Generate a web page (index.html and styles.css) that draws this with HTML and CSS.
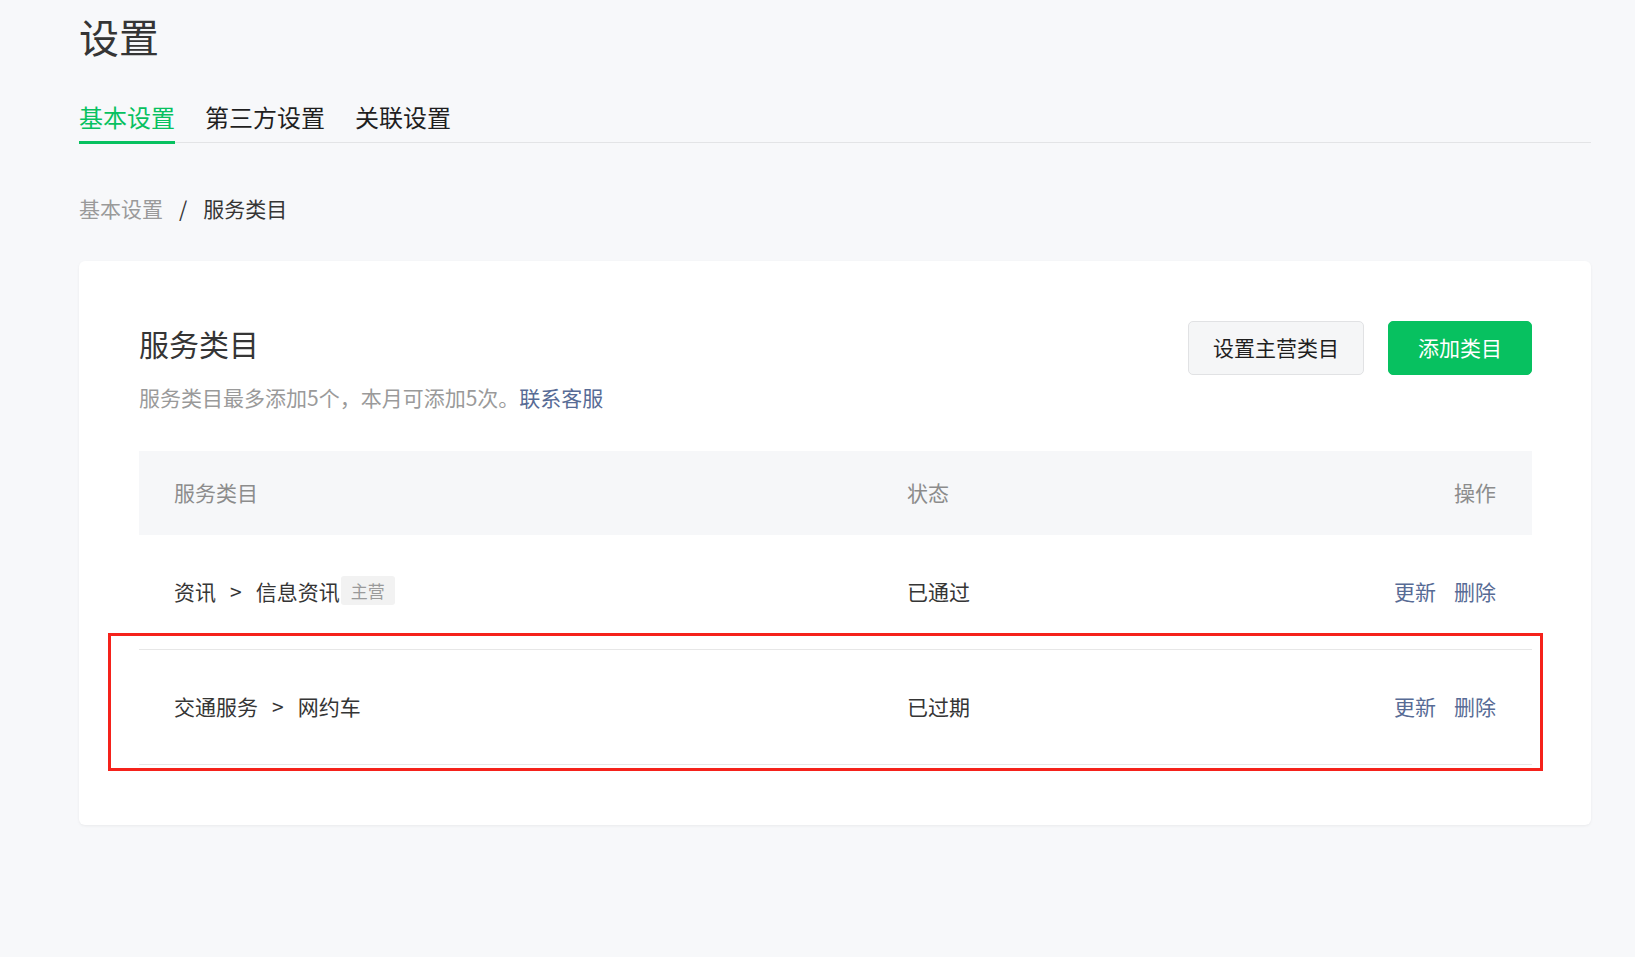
FILE: index.html
```html
<!DOCTYPE html>
<html lang="zh-CN">
<head>
<meta charset="utf-8">
<title>设置</title>
<link rel="stylesheet" href="styles.css">
</head>
<body>
<div class="page">
  <h1 class="page-title">设置</h1>
  <nav class="tabs">
    <a class="tab tab-active">基本设置</a>
    <a class="tab">第三方设置</a>
    <a class="tab">关联设置</a>
  </nav>
  <div class="breadcrumb">
    <span class="crumb-prev">基本设置</span>
    <span class="crumb-sep">/</span>
    <span class="crumb-cur">服务类目</span>
  </div>
  <section class="card">
    <div class="card-head">
      <div class="card-head-text">
        <h2 class="card-title">服务类目</h2>
        <p class="card-desc">服务类目最多添加5个，本月可添加5次。<a class="link">联系客服</a></p>
      </div>
      <div class="card-actions">
        <button class="btn btn-default">设置主营类目</button>
        <button class="btn btn-primary">添加类目</button>
      </div>
    </div>
    <div class="table">
      <div class="thead">
        <div class="cell">服务类目</div>
        <div class="cell">状态</div>
        <div class="cell cell-right">操作</div>
      </div>
      <div class="row">
        <div class="cell">资讯<span class="sep">&gt;</span>信息资讯<span class="tag">主营</span></div>
        <div class="cell">已通过</div>
        <div class="cell cell-right"><a class="link">更新</a><a class="link op-gap">删除</a></div>
      </div>
      <div class="row row-marked">
        <div class="cell">交通服务<span class="sep">&gt;</span>网约车</div>
        <div class="cell">已过期</div>
        <div class="cell cell-right"><a class="link">更新</a><a class="link op-gap">删除</a></div>
        <div class="mark-box"></div>
      </div>
    </div>
  </section>
</div>
</body>
</html>
```
FILE: styles.css
```css
* { box-sizing: border-box; }
html, body {
  margin: 0;
  padding: 0;
  background: #f7f8fa;
}
body {
  font-family: "Noto Sans CJK SC", "Noto Sans", sans-serif;
  color: #353535;
}
.page {
  padding: 8px 44px 130px 79px;
}
.page-title {
  margin: 0;
  font-size: 40px;
  line-height: 56px;
  font-weight: 400;
  color: #353535;
}
.tabs {
  display: flex;
  gap: 30px;
  margin-top: 36px;
  border-bottom: 1px solid #e3e4e6;
}
.tab {
  font-size: 24px;
  line-height: 34px;
  padding-bottom: 7px;
  border-bottom: 3px solid transparent;
  margin-bottom: -2px;
  color: #1f1f1f;
}
.tab-active {
  color: #07c160;
  border-bottom-color: #07c160;
}
.breadcrumb {
  margin-top: 50px;
  font-size: 21px;
  line-height: 30px;
  display: flex;
}
.crumb-prev { color: #9a9a9a; }
.crumb-sep { color: #353535; margin: 0 16px 0 16px; }
.crumb-cur { color: #353535; }
.card {
  margin-top: 38px;
  background: #fff;
  border-radius: 6px;
  box-shadow: 0 1px 3px rgba(0, 0, 0, 0.06);
  padding: 59px 59px 60px 60px;
}
.card-head {
  display: flex;
  justify-content: space-between;
  align-items: flex-start;
}
.card-title {
  margin: 0;
  font-size: 30px;
  line-height: 46px;
  font-weight: 400;
  color: #353535;
}
.card-desc {
  margin: 16px 0 0 0;
  font-size: 21px;
  line-height: 30px;
  color: #9a9a9a;
}
.link {
  color: #576b95;
  cursor: pointer;
}
.card-actions {
  display: flex;
  gap: 24px;
  padding-top: 1px;
}
.btn {
  font-family: inherit;
  font-size: 21px;
  height: 54px;
  min-width: 144px;
  padding: 0 24px 2px;
  border-radius: 5px;
  cursor: pointer;
}
.btn-default {
  background: #f5f6f7;
  border: 1px solid #e1e2e4;
  color: #1f1f1f;
}
.btn-primary {
  background: #07c160;
  border: 1px solid #07c160;
  color: #fff;
}
.table {
  margin-top: 39px;
}
.thead, .row {
  display: grid;
  grid-template-columns: 733px 1fr auto;
  align-items: center;
  padding: 0 36px 0 35px;
  font-size: 21px;
}
.thead {
  height: 84px;
  padding-bottom: 2px;
  background: #f6f7f9;
  color: #8c8c8c;
}
.row {
  height: 115px;
  padding-bottom: 3px;
  border-bottom: 1px solid #e7e7e7;
  color: #353535;
  position: relative;
}
.cell {
  display: flex;
  align-items: center;
  white-space: nowrap;
}
.cell-right {
  justify-content: flex-end;
}
.sep {
  margin: 0 14px;
}
.tag {
  margin-left: 1px;
  padding: 0 10px;
  height: 29px;
  line-height: 29px;
  font-size: 17px;
  color: #9a9a9a;
  background: #f2f2f2;
  border-radius: 3px;
}
.op-gap {
  margin-left: 18px;
}
.mark-box {
  position: absolute;
  top: -17px;
  left: -31px;
  right: -11px;
  bottom: -7px;
  border: 3px solid #f5221b;
  pointer-events: none;
}
```
